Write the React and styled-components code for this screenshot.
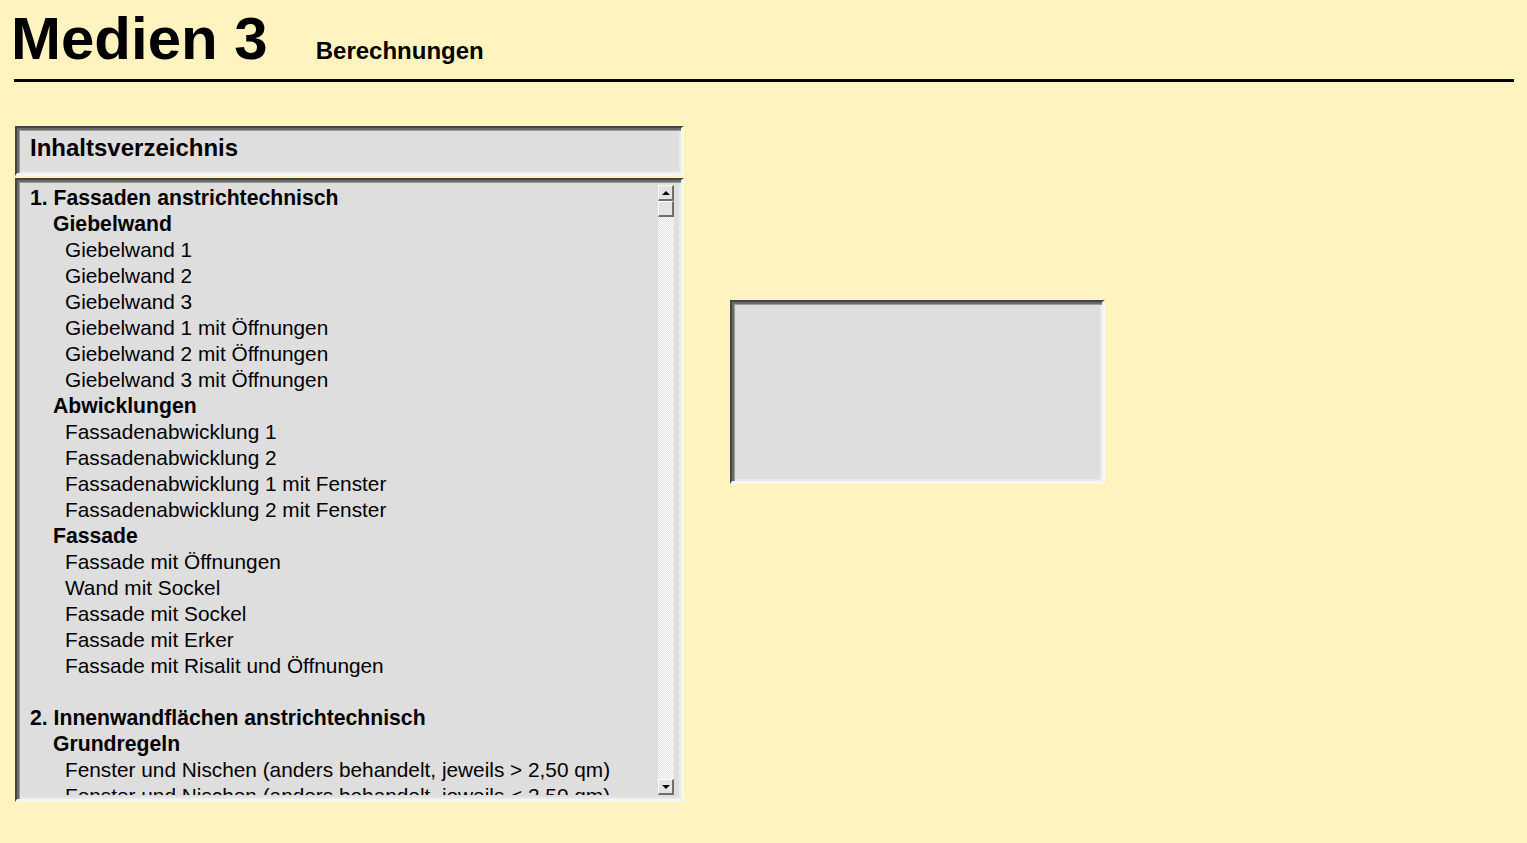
import styled, { createGlobalStyle } from "styled-components";

const GlobalStyle = createGlobalStyle`
  html, body {
    margin: 0;
    padding: 0;
    background-color: #fff4bf;
  }
  body {
    font-family: "Liberation Sans", Arial, sans-serif;
    color: #000;
    min-height: 843px;
  }
`;

const Page = styled.div`
  padding: 9px 13px 0 14px;
`;

const Header = styled.div`
  display: flex;
  align-items: baseline;
  .Title {
    margin: 0 0 0 -3px;
    font-size: 60px;
    line-height: 60px;
    font-weight: 700;
  }
  .SubTitle {
    margin-left: 48px;
    font-size: 24px;
    font-weight: 700;
  }
`;

const Rule = styled.div`
  height: 3px;
  background-color: #000;
  margin-top: 10px;
`;

const Content = styled.div`
  display: flex;
  align-items: flex-start;
  margin-top: 44px;
  margin-left: 1px;
`;

const Column = styled.div`
  display: flex;
  flex-direction: column;
  gap: 2px;
  width: 669px;
`;

// sunken frame, dark top/left and light bottom/right
const Sunken = styled.div`
  box-sizing: border-box;
  background-color: #dedede;
  border-style: solid;
  border-width: 2px 3px 3px 2px;
  border-color: #444 #f6f6f6 #f6f6f6 #444;
  box-shadow: inset 2px 2px 0 #6a6a6a, inset 3px 3px 0 #9a9a9a,
    inset -2px -2px 0 #e9e9e9;
  height: ${(p) => p.h}px;
  width: ${(p) => (p.w ? `${p.w}px` : "100%")};
`;

const PanelTitle = styled(Sunken)`
  padding: 1px 0 0 13px;
  font-size: 24px;
  font-weight: 700;
  line-height: 38px;
`;

const ListPanel = styled(Sunken)`
  display: flex;
  padding: 5px 7px 4px 3px;
`;

const List = styled.div`
  flex: 1;
  overflow: hidden;
`;

const Item = styled.div`
  font-size: ${(p) => (p.level < 3 ? 21.2 : 20.8)}px;
  line-height: 26px;
  height: 26px;
  white-space: nowrap;
  font-weight: ${(p) => (p.level < 3 ? 700 : 400)};
  padding-left: ${(p) => (p.level === 1 ? 10 : p.level === 2 ? 33 : 45)}px;
`;

const Scrollbar = styled.div`
  width: 16px;
  display: flex;
  flex-direction: column;
  margin-left: 4px;
  background: repeating-conic-gradient(#fdfdfd 0 25%, #e4e4e4 0 50%) 0 0 / 2px
    2px;
`;

const ScrollButton = styled.div`
  box-sizing: border-box;
  height: 16px;
  display: flex;
  align-items: center;
  justify-content: center;
  background-color: #e4e4e4;
  border-style: solid;
  border-width: 1px 2px 2px 1px;
  border-color: #fff #6e6e6e #6e6e6e #fff;
  &::after {
    content: "";
    width: 0;
    height: 0;
    border-left: 4px solid transparent;
    border-right: 4px solid transparent;
    ${(p) =>
      p.down
        ? "border-top: 4px solid #000;"
        : "border-bottom: 4px solid #000;"}
  }
`;

const Thumb = styled.div`
  box-sizing: border-box;
  height: 16px;
  background-color: #e4e4e4;
  border-style: solid;
  border-width: 1px 2px 2px 1px;
  border-color: #fff #6e6e6e #6e6e6e #fff;
`;

const Track = styled.div`
  flex: 1;
`;

const PreviewBox = styled(Sunken)`
  margin-left: 46px;
  margin-top: 174px;
`;

const items = [
  [1, "1. Fassaden anstrichtechnisch"],
  [2, "Giebelwand"],
  [3, "Giebelwand 1"],
  [3, "Giebelwand 2"],
  [3, "Giebelwand 3"],
  [3, "Giebelwand 1 mit Öffnungen"],
  [3, "Giebelwand 2 mit Öffnungen"],
  [3, "Giebelwand 3 mit Öffnungen"],
  [2, "Abwicklungen"],
  [3, "Fassadenabwicklung 1"],
  [3, "Fassadenabwicklung 2"],
  [3, "Fassadenabwicklung 1 mit Fenster"],
  [3, "Fassadenabwicklung 2 mit Fenster"],
  [2, "Fassade"],
  [3, "Fassade mit Öffnungen"],
  [3, "Wand mit Sockel"],
  [3, "Fassade mit Sockel"],
  [3, "Fassade mit Erker"],
  [3, "Fassade mit Risalit und Öffnungen"],
  [3, ""],
  [1, "2. Innenwandflächen anstrichtechnisch"],
  [2, "Grundregeln"],
  [3, "Fenster und Nischen (anders behandelt, jeweils > 2,50 qm)"],
  [3, "Fenster und Nischen (anders behandelt, jeweils < 2,50 qm)"],
];

const App = () => {
  return (
    <>
      <GlobalStyle />
      <Page>
        <Header>
          <h1 className="Title">Medien 3</h1>
          <span className="SubTitle">Berechnungen</span>
        </Header>
        <Rule />
        <Content>
          <Column>
            <PanelTitle h={50}>Inhaltsverzeichnis</PanelTitle>
            <ListPanel h={624}>
              <List>
                {items.map(([level, text], i) => (
                  <Item key={i} level={level}>
                    {text}
                  </Item>
                ))}
              </List>
              <Scrollbar>
                <ScrollButton />
                <Thumb />
                <Track />
                <ScrollButton down />
              </Scrollbar>
            </ListPanel>
          </Column>
          <PreviewBox w={375} h={184} />
        </Content>
      </Page>
    </>
  );
};

export default App;
